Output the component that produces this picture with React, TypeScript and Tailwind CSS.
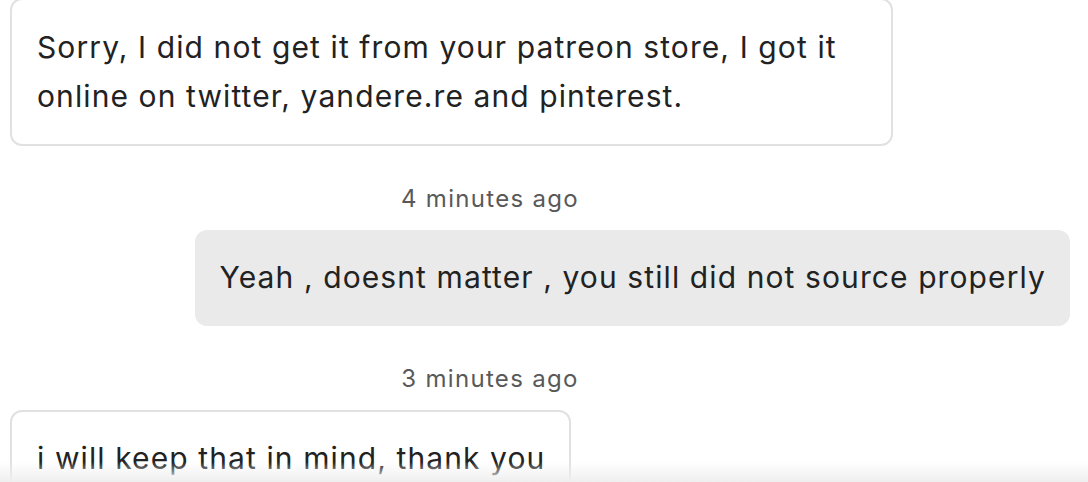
import React from "react";

export default function App() {
  return (
    <div
      className="relative w-[1088px] h-[482px] overflow-hidden bg-white text-[#222222]"
      style={{ fontFamily: "Inter, 'Noto Sans', sans-serif" }}
    >
      <div className="flex flex-col pl-[10px] pr-[18px] -mt-[2px]">
        <div className="self-start w-[883px] rounded-[12px] border-2 border-[#e1e1e1] pl-[25px] pr-[20px] pt-[23px] pb-[23px] text-[30px] leading-[49px] tracking-[1.1px]">
          Sorry, I did not get it from your patreon store, I got it online on twitter, yandere.re and pinterest.
        </div>

        <div className="w-[960px] mt-[35px] mb-[13px] h-[36px] flex items-center justify-center text-[24px] leading-[36px] tracking-[1.3px] text-[#595959]">
          4 minutes ago
        </div>

        <div className="self-end rounded-[12px] bg-[#eaeaea] pl-[25px] pr-[24px] pt-[23px] pb-[24px] text-[30px] leading-[49px] tracking-[1.1px]">
          Yeah , doesnt matter , you still did not source properly
        </div>

        <div className="w-[960px] mt-[35px] mb-[13px] h-[36px] flex items-center justify-center text-[24px] leading-[36px] tracking-[1.3px] text-[#595959]">
          3 minutes ago
        </div>

        <div className="self-start rounded-[12px] border-2 border-[#e1e1e1] pl-[25px] pr-[24px] py-[22px] text-[30px] leading-[49px] tracking-[1.1px]">
          i will keep that in mind, thank you
        </div>
      </div>

      <div className="absolute left-0 right-0 bottom-0 h-[20px] bg-gradient-to-b from-white/0 to-[#efefef]" />
    </div>
  );
}
